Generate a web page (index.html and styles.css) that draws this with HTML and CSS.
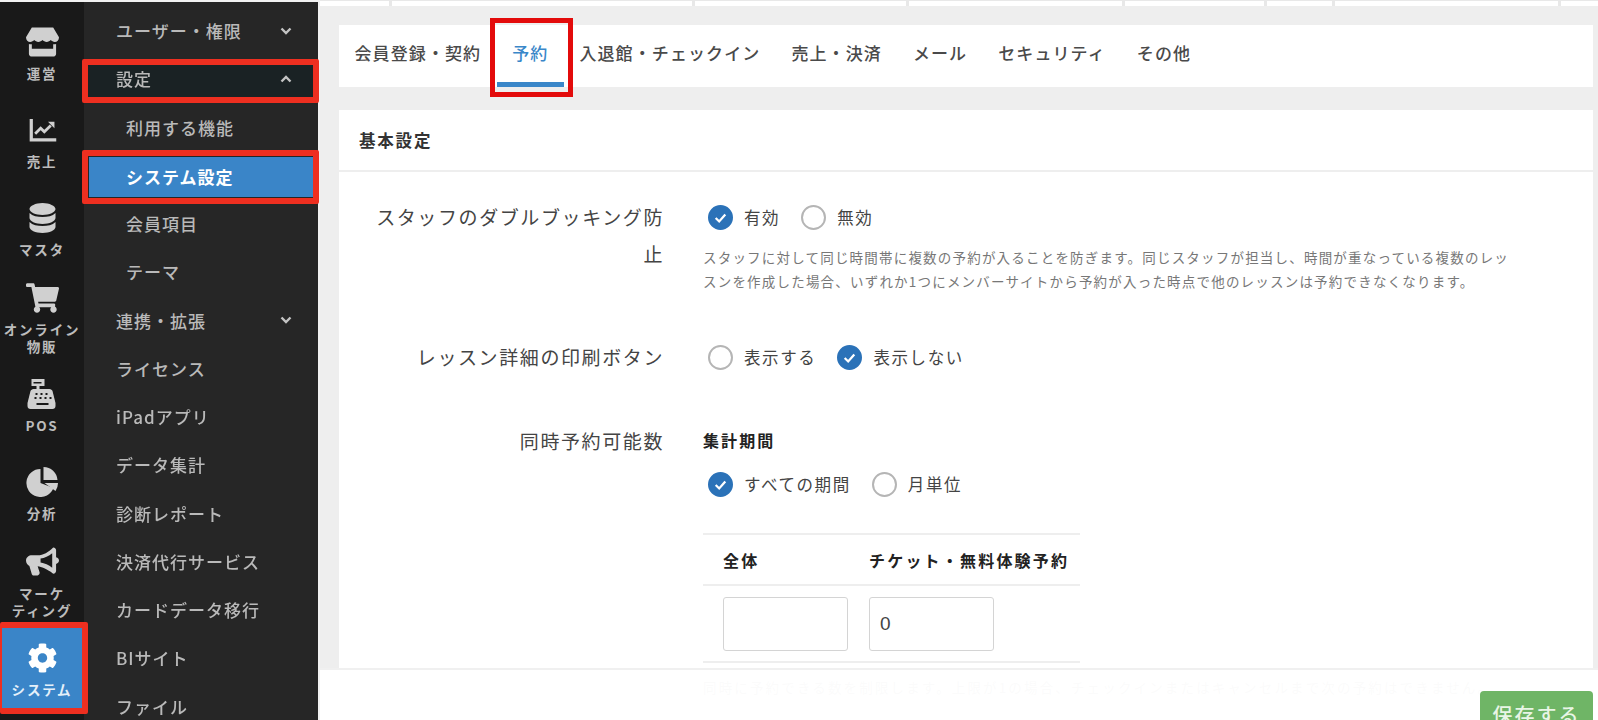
FILE: index.html
```html
<!DOCTYPE html>
<html lang="ja">
<head>
<meta charset="utf-8">
<title>システム設定</title>
<link rel="stylesheet" href="styles.css">
</head>
<body>
<div class="app">
  <nav class="rail">
    <a class="rail-item">
      <svg class="rail-icon" viewBox="0 0 34 30"><path fill-rule="evenodd" d="M6 0h22l6 10c0 3-2 5-4.300 5-1.700 0-3.200-1-4.200-2-1 1-2.500 2-4.200 2s-3.300-1-4.300-2c-1 1-2.600 2-4.300 2s-3.200-1-4.200-2c-1 1-2.500 2-4.200 2C2 15 0 13 0 10zM3 17c1 .3 2.500.3 3 .2V22h22v-4.800c.8.100 2 .1 3-.2v10c0 1.700-1.300 3-3 3H6c-1.700 0-3-1.300-3-3z"/></svg>
      <span>運営</span>
    </a>
    <a class="rail-item">
      <svg class="rail-icon" viewBox="0 0 36 30"><path d="M4 3h3.500v21H33v3.500H4z"/><path class="line" d="M10 19l6-6 4 4 7-7"/><path d="M24 6h7v7z"/></svg>
      <span>売上</span>
    </a>
    <a class="rail-item">
      <svg class="rail-icon" viewBox="0 0 32 30"><path d="M3 6c0-3 6-6 13-6s13 3 13 6-6 6-13 6S3 9 3 6zM3 10c3 3 8 4 13 4s10-1 13-4v5c0 3-6 6-13 6S3 18 3 15zM3 19c3 3 8 4 13 4s10-1 13-4v5c0 3-6 6-13 6S3 27 3 24z"/></svg>
      <span>マスタ</span>
    </a>
    <a class="rail-item">
      <svg class="rail-icon" viewBox="0 0 576 512"><path d="M528.120 301.319l47.273-208C578.806 78.301 567.391 64 551.990 64H159.208l-9.166-44.810C147.758 8.021 137.930 0 126.529 0H24C10.745 0 0 10.745 0 24v16c0 13.255 10.745 24 24 24h69.883l70.248 343.435C147.325 417.100 136 435.222 136 456c0 30.928 25.072 56 56 56s56-25.072 56-56c0-15.674-6.447-29.835-16.824-40h209.647C430.447 426.165 424 440.326 424 456c0 30.928 25.072 56 56 56s56-25.072 56-56c0-22.172-12.888-41.332-31.579-50.405l5.517-24.276c3.413-15.018-8.002-29.319-23.403-29.319H218.117l-6.545-32h293.145c11.206 0 20.920-7.754 23.403-18.681z"/></svg>
      <span>オンライン<br>物販</span>
    </a>
    <a class="rail-item">
      <svg class="rail-icon" viewBox="0 0 32 30"><path fill-rule="evenodd" d="M5 0h13v7h-5v3h10c1.500 0 2.500 1 3 2l3 12v3c0 1.700-1.300 3-3 3H4c-1.700 0-3-1.300-3-3v-3l3-12c.5-1 1.500-2 3-2h3V7H5zM7 3v1.500h8V3zM9 14v2h2v-2zM14 14v2h2v-2zM19 14v2h2v-2zM8 18v2h2v-2zM13 18v2h2v-2zM18 18v2h2v-2zM23 18v2h2v-2zM10 24v2h12v-2z"/></svg>
      <span>POS</span>
    </a>
    <a class="rail-item">
      <svg class="rail-icon" viewBox="0 0 32 30"><path d="M14 2a14 14 0 1 0 13 19L14 16z"/><path d="M17 0a14 14 0 0 1 14 13H17z"/><path d="M18 16h13.500a14 14 0 0 1-2.500 8z"/></svg>
      <span>分析</span>
    </a>
    <a class="rail-item">
      <svg class="rail-icon" viewBox="0 0 34 30"><path fill-rule="evenodd" d="M28 0c2 0 3 1.500 3 3v7c2 .5 3 2 3 3.500S33 16.500 31 17v7c0 1.500-1 3-3 3-7-5-12-7-16-7.500l2 6c.3 1-.2 2.500-2 3.500H8c-1 0-1.600-.7-2-1.500L3.500 19C1.500 18 0 16 0 13.500 0 10 3 8 6 8h6c6 0 11-3 16-8zM27 6c-3.500 3-8 5-12 5.500v4c4 .5 8.500 2.500 12 5.500z"/></svg>
      <span>マーケ<br>ティング</span>
    </a>
    <a class="rail-item is-active">
      <svg class="rail-icon" viewBox="0 0 512 512"><path d="M487.400 315.700l-42.600-24.600c4.300-23.200 4.300-47 0-70.200l42.600-24.600c4.900-2.800 7.100-8.600 5.500-14-11.100-35.600-30-67.800-54.700-94.600-3.800-4.100-10-5.100-14.800-2.300L380.800 110c-17.900-15.400-38.500-27.300-60.800-35.100V25.800c0-5.600-3.900-10.500-9.400-11.700-36.700-8.200-74.300-7.800-109.200 0-5.500 1.200-9.400 6.100-9.400 11.700V75c-22.200 7.900-42.800 19.800-60.800 35.100L88.700 85.500c-4.900-2.800-11-1.900-14.800 2.300-24.700 26.700-43.600 58.900-54.700 94.600-1.700 5.400.6 11.200 5.500 14L67.300 221c-4.300 23.200-4.300 47 0 70.200l-42.600 24.600c-4.900 2.800-7.100 8.600-5.500 14 11.100 35.600 30 67.800 54.700 94.600 3.800 4.100 10 5.100 14.800 2.300l42.600-24.600c17.900 15.400 38.500 27.300 60.800 35.100v49.200c0 5.600 3.900 10.500 9.400 11.700 36.700 8.200 74.300 7.800 109.200 0 5.500-1.200 9.400-6.100 9.400-11.700v-49.200c22.200-7.900 42.800-19.800 60.800-35.100l42.600 24.600c4.900 2.800 11 1.900 14.800-2.300 24.700-26.700 43.600-58.900 54.700-94.600 1.500-5.500-.7-11.300-5.600-14.100zM256 336c-44.100 0-80-35.900-80-80s35.900-80 80-80 80 35.900 80 80-35.900 80-80 80z"/></svg>
      <span>システム</span>
      <i class="mark mark-rail"></i>
    </a>
  </nav>

  <nav class="sub">
    <a class="sub-row">ユーザー・権限<svg class="chev" viewBox="0 0 12 8"><path d="M1.500 1.500L6 6l4.500-4.500"/></svg></a>
    <a class="sub-row"><span class="over">設定</span><svg class="chev over" viewBox="0 0 12 8"><path d="M1.500 6.500L6 2l4.500 4.500"/></svg><i class="mark mark-open"></i></a>
    <a class="sub-row child">利用する機能</a>
    <a class="sub-row child is-active">システム設定<i class="mark mark-current"></i></a>
    <a class="sub-row child">会員項目</a>
    <a class="sub-row child">テーマ</a>
    <a class="sub-row">連携・拡張<svg class="chev" viewBox="0 0 12 8"><path d="M1.500 1.500L6 6l4.500-4.500"/></svg></a>
    <a class="sub-row">ライセンス</a>
    <a class="sub-row">iPadアプリ</a>
    <a class="sub-row">データ集計</a>
    <a class="sub-row">診断レポート</a>
    <a class="sub-row">決済代行サービス</a>
    <a class="sub-row">カードデータ移行</a>
    <a class="sub-row">BIサイト</a>
    <a class="sub-row">ファイル</a>
  </nav>

  <main class="main">
    <div class="strip">
      <i class="cell c1"></i><i class="cell c2"></i><i class="cell c3"></i><i class="cell c4"></i><i class="cell c5"></i><i class="cell c6"></i><i class="cell c7"></i><i class="cell c8"></i>
    </div>

    <div class="tabs">
      <a class="tab">会員登録・契約</a>
      <a class="tab is-active">予約<i class="mark mark-tab"></i></a>
      <a class="tab">入退館・チェックイン</a>
      <a class="tab">売上・決済</a>
      <a class="tab">メール</a>
      <a class="tab">セキュリティ</a>
      <a class="tab">その他</a>
    </div>

    <section class="card">
      <h2 class="card-head">基本設定</h2>
      <div class="card-body">
        <div class="row first">
          <div class="label">スタッフのダブルブッキング防止</div>
          <div class="value">
            <div class="choices">
              <span class="radio on"><svg viewBox="0 0 24 24"><path d="M6.500 12.500l4 4 7-8"/></svg></span><span class="choice">有効</span>
              <span class="radio"></span><span class="choice">無効</span>
            </div>
            <p class="help">スタッフに対して同じ時間帯に複数の予約が入ることを防ぎます。同じスタッフが担当し、時間が重なっている複数のレッスンを作成した場合、いずれか1つにメンバーサイトから予約が入った時点で他のレッスンは予約できなくなります。</p>
          </div>
        </div>

        <div class="row second">
          <div class="label">レッスン詳細の印刷ボタン</div>
          <div class="value">
            <div class="choices">
              <span class="radio"></span><span class="choice">表示する</span>
              <span class="radio on"><svg viewBox="0 0 24 24"><path d="M6.500 12.500l4 4 7-8"/></svg></span><span class="choice">表示しない</span>
            </div>
          </div>
        </div>

        <div class="row third">
          <div class="label">同時予約可能数</div>
          <div class="value">
            <div class="subhead">集計期間</div>
            <div class="choices period">
              <span class="radio on"><svg viewBox="0 0 24 24"><path d="M6.500 12.500l4 4 7-8"/></svg></span><span class="choice">すべての期間</span>
              <span class="radio"></span><span class="choice">月単位</span>
            </div>
            <table class="limits">
              <thead>
                <tr><th>全体</th><th>チケット・無料体験予約</th></tr>
              </thead>
              <tbody>
                <tr>
                  <td><input class="num" type="text" value="" aria-label="全体"></td>
                  <td><input class="num" type="text" value="0" aria-label="チケット・無料体験予約"></td>
                </tr>
              </tbody>
            </table>
            <p class="help note">同時に予約できる数を制限します。上限が1の場合、チェックインまたはキャンセルまで次の予約はできません。</p>
          </div>
        </div>
      </div>
    </section>

    <footer class="savebar">
      <button class="save" type="button">保存する</button>
    </footer>
  </main>
</div>
</body>
</html>
```
FILE: styles.css
```css
* { box-sizing: border-box; }

html, body {
  margin: 0;
  height: 720px;
  overflow: hidden;
  background: #f2f2f2;
}

body {
  font-family: "Noto Sans CJK JP", "Liberation Sans", sans-serif;
  color: #444;
}

.app {
  display: flex;
  height: 720px;
  filter: blur(0.7px);
}

/* icon rail */
.rail {
  flex: 0 0 84px;
  margin-top: 2px;
  padding-top: 6px;
  background: #191919;
}

.rail-item {
  position: relative;
  display: flex;
  flex-direction: column;
  align-items: center;
  justify-content: center;
  height: 88px;
  padding-top: 5px;
  color: #bcbcbc;
  font-size: 13.500px;
  font-weight: 700;
  line-height: 17px;
  letter-spacing: 1.800px;
  text-align: center;
}

.rail-item span { white-space: nowrap; }

.rail-icon {
  display: block;
  width: 33px;
  height: 30px;
  margin-bottom: 8px;
  fill: #d0d0d0;
}

.rail-icon .line {
  fill: none;
  stroke: #d0d0d0;
  stroke-width: 3;
}

.rail-item.is-active {
  margin-left: 2px;
  width: 80px;
  background: #3a85c8;
  color: #e4f0fa;
}

.rail-item.is-active .rail-icon { fill: #fff; }

/* second-level menu */
.sub {
  flex: 0 0 234px;
  margin-top: 2px;
  padding-top: 4.500px;
  background: #262626;
}

.sub-row {
  position: relative;
  display: flex;
  align-items: center;
  justify-content: space-between;
  height: 48.250px;
  padding: 0 26px 0 32px;
  color: #b9b9b9;
  font-size: 17px;
  font-weight: 500;
  letter-spacing: 1px;
  white-space: nowrap;
}

.sub-row.child { padding-left: 42px; }

.sub-row.is-active {
  margin: 5.500px 5px 2.500px;
  height: 40.250px;
  padding-left: 37px;
  background: #3a85c8;
  color: #fff;
  font-weight: 700;
}

.chev {
  width: 12px;
  height: 8px;
  fill: none;
  stroke: #c4c4c4;
  stroke-width: 2.400;
}

.over {
  position: relative;
  z-index: 4;
}

/* red annotation frames, drawn over the items they mark */
.mark {
  position: absolute;
  display: block;
  pointer-events: none;
  border: 6px solid #ee2f20;
  border-radius: 2px;
  z-index: 3;
}

.mark-rail {
  top: -2px;
  right: -6px;
  bottom: -2px;
  left: -2px;
  border-left-width: 2px;
}

.mark-open {
  top: 4.500px;
  right: -1px;
  bottom: 0.500px;
  left: -2px;
  background: #1a2224;
}

.mark-current {
  top: -7px;
  right: -6px;
  bottom: -7px;
  left: -7px;
}

.mark-tab {
  top: -7px;
  right: -9px;
  bottom: -15px;
  left: -7px;
  border: 5px solid #e30b0b;
  border-radius: 0;
}

/* content */
.main {
  position: relative;
  flex: 1;
  min-width: 0;
  margin-left: 2px;
  padding: 0 5px 0 19px;
  overflow: hidden;
  background: #eee;
}

.strip {
  display: flex;
  gap: 3px;
  height: 6px;
  margin: 0 -5px 19px -19px;
  padding-top: 1px;
  background: #e8e8e8;
}

.cell { display: block; background: #fff; }
.c1 { flex: 0 0 69px; }
.c2 { flex: 0 0 300px; }
.c3 { flex: 0 0 211px; }
.c4 { flex: 0 0 213px; }
.c5 { flex: 0 0 139px; }
.c6 { flex: 0 0 65px; }
.c7 { flex: 0 0 223px; }
.c8 { flex: 1; }

.tabs {
  display: flex;
  height: 62px;
  margin-bottom: 23px;
  background: #fff;
}

.tab {
  position: relative;
  display: flex;
  align-items: center;
  padding: 0 15.500px 8px;
  color: #4a4a4a;
  font-size: 17px;
  font-weight: 500;
  letter-spacing: 1.100px;
  white-space: nowrap;
}

.tab.is-active {
  color: #3a87c9;
  border-bottom: 5px solid #3a87c9;
  padding-bottom: 3px;
}

.card { background: #fff; }

.card-head {
  display: flex;
  align-items: center;
  height: 62px;
  margin: 0;
  padding-left: 20px;
  border-bottom: 2px solid #eee;
  color: #333;
  font-size: 16.500px;
  font-weight: 700;
  letter-spacing: 1.800px;
}

.card-body { padding: 26px 0 40px; }

.row {
  display: flex;
  gap: 39px;
}

.second { margin-top: 45px; }
.third { margin-top: 46px; }

.label {
  flex: 0 0 325px;
  padding-left: 25px;
  color: #444;
  font-size: 19px;
  line-height: 37px;
  letter-spacing: 1.600px;
  text-align: right;
}

.value { min-width: 0; flex: 1; }

.choices {
  display: flex;
  align-items: center;
  height: 38px;
  padding-left: 5px;
}

.radio {
  flex: 0 0 25px;
  height: 25px;
  margin-right: 11px;
  border: 2px solid #b5b5b5;
  border-radius: 50%;
  background: #fff;
}

.radio svg {
  display: block;
  width: 100%;
  height: 100%;
  fill: none;
  stroke: #fff;
  stroke-width: 2.600;
}

.radio.on {
  border-color: #2b72b8;
  background: #2b72b8;
}

.choice {
  margin-right: 21px;
  color: #444;
  font-size: 16.500px;
  letter-spacing: 1.600px;
  white-space: nowrap;
}

.help {
  margin: 9px 0 0;
  width: 815px;
  color: #777;
  font-size: 13.500px;
  line-height: 24px;
  letter-spacing: 1.200px;
}

.subhead {
  height: 38px;
  color: #222;
  font-size: 16px;
  font-weight: 700;
  line-height: 36px;
  letter-spacing: 2.100px;
}

.period { margin-top: 5px; }

.limits {
  width: 377px;
  margin-top: 30px;
  border-collapse: collapse;
  table-layout: fixed;
}

.limits th {
  height: 51px;
  padding: 0 0 0 20px;
  border-top: 2px solid #eee;
  border-bottom: 2px solid #eee;
  color: #222;
  font-size: 16px;
  font-weight: 700;
  letter-spacing: 2.200px;
  text-align: left;
  white-space: nowrap;
}

.limits th:first-child { width: 146px; }

.limits td {
  height: 77px;
  padding: 0 0 0 20px;
  border-bottom: 2px solid #eee;
}

.num {
  display: block;
  width: 125px;
  height: 54px;
  padding: 0 10px;
  border: 1.500px solid #d4d4d4;
  border-radius: 3px;
  color: #444;
  font-family: "Liberation Sans", sans-serif;
  font-size: 19px;
  outline: none;
}

.note {
  width: auto;
  margin-top: 12px;
  letter-spacing: 2.150px;
  white-space: nowrap;
}

/* fixed save bar over the scrolled form */
.savebar {
  position: absolute;
  right: 0;
  bottom: 0;
  left: 0;
  display: flex;
  justify-content: flex-end;
  height: 52px;
  padding: 21px 5px 0 0;
  border-top: 2px solid #f0f0f0;
  background: rgba(255, 255, 255, .97);
}

.save {
  width: 113px;
  height: 50px;
  padding: 0 0 4px;
  border: 0;
  border-radius: 4px 4px 0 0;
  background: #6fb566;
  color: #e9f5e6;
  font-family: "Noto Sans CJK JP", sans-serif;
  font-size: 20px;
  font-weight: 500;
  letter-spacing: 2px;
}
```
